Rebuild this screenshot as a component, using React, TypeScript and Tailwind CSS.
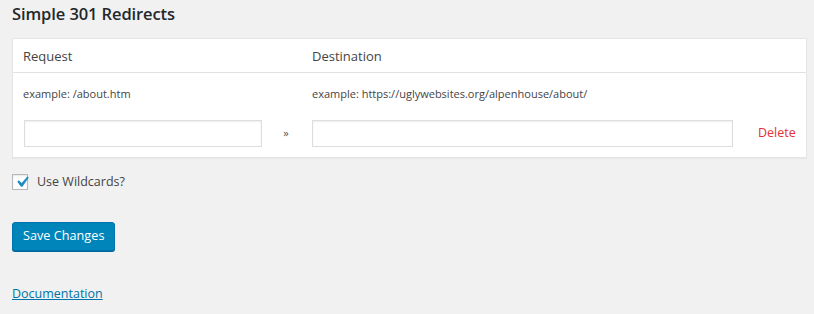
import React, { useState } from "react"

const font = { fontFamily: '"Open Sans", "Noto Sans", sans-serif' }

export default function App() {
  const [wildcards, setWildcards] = useState(true)

  return (
    <div className="min-h-[314px] w-[814px] bg-[#f1f1f1] pl-3 text-[#444]" style={font}>
      <h2 className="pt-[1px] text-[16.5px] leading-[26px] font-semibold tracking-[-0.1px] text-[#23282d]">
        Simple 301 Redirects
      </h2>

      {/* Redirects table */}
      <div className="mt-[11px] w-[795px] border border-[#e5e5e5] bg-white shadow-[0_1px_1px_rgba(0,0,0,0.04)]">
        <div className="flex h-[34px] items-center border-b border-[#e1e1e1] pt-[2px] pl-[10px] text-[13px]">
          <div className="w-[289px]">Request</div>
          <div>Destination</div>
        </div>
        <div className="flex h-[40px] items-center pt-[2px] pl-[10px] text-[11px]">
          <div className="w-[289px]">example: /about.htm</div>
          <div>example: https://uglywebsites.org/alpenhouse/about/</div>
        </div>
        <div className="mt-[7px] mb-[10px] flex items-center pl-[11px]">
          <input
            type="text"
            className="h-[27px] w-[238px] border border-[#ddd] bg-white shadow-[inset_0_1px_2px_rgba(0,0,0,0.07)] outline-none"
          />
          <div className="w-[48px] text-center text-[11px] text-[#555]">»</div>
          <input
            type="text"
            className="ml-[2px] h-[27px] w-[421px] border border-[#ddd] bg-white shadow-[inset_0_1px_2px_rgba(0,0,0,0.07)] outline-none"
          />
          <a href="#" className="ml-[25px] text-[12.5px] text-[#dc3232]">
            Delete
          </a>
        </div>
      </div>

      {/* Wildcards */}
      <label className="mt-[15px] flex items-center gap-[9px] text-[12.5px]">
        <span
          onClick={() => setWildcards(!wildcards)}
          className="flex h-[16px] w-[16px] items-center justify-center border border-[#b4b9be] bg-white shadow-[inset_0_1px_2px_rgba(0,0,0,0.1)]"
        >
          {wildcards && (
            <svg viewBox="0 0 20 20" className="-mr-[3px] h-[22px] w-[22px] shrink-0">
              <path d="M14.83 4.89l1.34.94-5.81 8.38H9.02L5.78 9.67l1.34-1.25 2.57 2.4z" fill="#1e8cbe" />
            </svg>
          )}
        </span>
        Use Wildcards?
      </label>

      <button className="mt-[30px] h-[29px] rounded-[3px] border border-[#0073aa] bg-[#0085ba] px-[10px] pb-[1px] text-[12.7px] text-white shadow-[0_1px_0_#006799]">
        Save Changes
      </button>

      <div className="mt-[29px]">
        <a href="#" className="text-[12.5px] text-[#0073aa] underline">
          Documentation
        </a>
      </div>
    </div>
  )
}
